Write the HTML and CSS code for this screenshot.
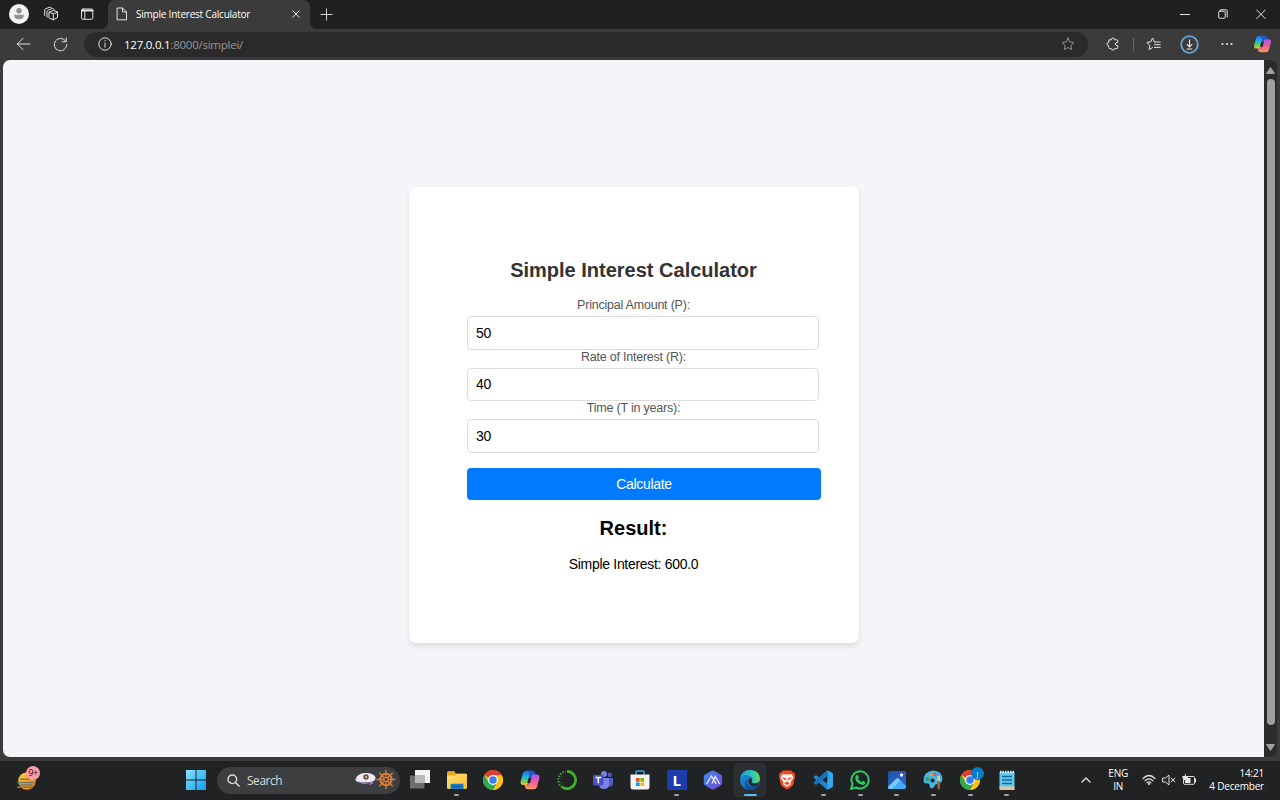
FILE: index.html
```html
<!DOCTYPE html>
<html lang="en">
<head>
<meta charset="utf-8">
<title>Simple Interest Calculator</title>
<link rel="stylesheet" href="styles.css">
</head>
<body>
<svg width="0" height="0" class="defs">
  <defs>
    <linearGradient id="win" x1="0" y1="0" x2="1" y2="1"><stop offset="0" stop-color="#8be2ff"/><stop offset="1" stop-color="#0a9df0"/></linearGradient>
    <linearGradient id="copA" x1="0" y1="0" x2="0" y2="1"><stop offset="0" stop-color="#1673e8"/><stop offset=".35" stop-color="#16a8e8"/><stop offset=".7" stop-color="#5cc96a"/><stop offset="1" stop-color="#f2c32c"/></linearGradient>
    <linearGradient id="copB" x1="0" y1="0" x2="0" y2="1"><stop offset="0" stop-color="#9f5cf0"/><stop offset=".5" stop-color="#ee5a9c"/><stop offset="1" stop-color="#fb9a5a"/></linearGradient>
    <linearGradient id="fold" x1="0" y1="0" x2="1" y2="1"><stop offset="0" stop-color="#ffe07a"/><stop offset="1" stop-color="#fbbd28"/></linearGradient>
    <linearGradient id="edgeA" x1="0" y1="0" x2="1" y2="0"><stop offset="0" stop-color="#1ba3e0"/><stop offset=".6" stop-color="#2fc3b8"/><stop offset="1" stop-color="#63dc5c"/></linearGradient>
    <linearGradient id="edgeB" x1="0" y1="0" x2="1" y2="1"><stop offset="0" stop-color="#1b8fdc"/><stop offset="1" stop-color="#1463b8"/></linearGradient>
    <linearGradient id="hex" x1="0" y1="0" x2="1" y2="1"><stop offset="0" stop-color="#3b8df0"/><stop offset="1" stop-color="#7544d8"/></linearGradient>
    <linearGradient id="photo" x1="0" y1="0" x2="1" y2="1"><stop offset="0" stop-color="#1c54b0"/><stop offset="1" stop-color="#3a5fc8"/></linearGradient>
    <linearGradient id="globe" x1="0" y1="0" x2="1" y2="1"><stop offset="0" stop-color="#ffd23c"/><stop offset="1" stop-color="#e77a12"/></linearGradient>
    <symbol id="copilot" viewBox="0 0 24 24">
      <path d="M7.500 1h7q3 0 3.500 3l.2 1h-2.600q-2 0-2.600 2l-2.500 8.500Q9.800 18 7.500 18H4Q0 18 .8 13.500L3.500 4Q4.500 1 7.500 1z" fill="url(#copA)"/>
      <path d="M14.500 1q3 0 3.500 3l.5 2h-2.700q-2 0-2.600 2L12 12 11 6Q10.500 1 7.500 1z" fill="#2456cc"/>
      <path d="M16.500 23h-7q-3 0-3.500-3l-.4-2h2.800q2 0 2.600-2l2.500-8.500Q14.200 5.500 16.500 5.500H20q4 0 3.200 4.500L20.500 20q-1 3-4 3z" fill="url(#copB)"/>
      <path d="M10.500 9h3.400L12 15.500h-3.400z" fill="#202327"/>
    </symbol>
    <symbol id="chrome" viewBox="0 0 24 24">
      <circle cx="12" cy="12" r="12" fill="#fbc116"/>
      <path d="M12 12 1.600 6A12 12 0 0 1 22.400 6H12z" fill="#e33b2e"/>
      <path d="M1.600 6A12 12 0 0 0 12 24l5.200-9L12 12 6.800 15z" fill="#2da94f"/>
      <path d="M22.400 6A12 12 0 0 1 12 24l5.200-9A6 6 0 0 0 12 6z" fill="#fbc116"/>
      <circle cx="12" cy="12" r="6" fill="#fff"/><circle cx="12" cy="12" r="4.600" fill="#3b7ded"/>
    </symbol>
  </defs>
</svg>
<div class="screen">
  <header class="tabbar">
    <svg class="avatar" viewBox="0 0 20 20"><circle cx="10" cy="10" r="10" fill="#f4f4f4"/><circle cx="10" cy="6.800" r="2.700" fill="#919191"/><path d="M5.300 10.700h9.400q.5 4.500-4.700 4.500t-4.700-4.500z" fill="#919191"/></svg>
    <svg class="spaces line" viewBox="0 0 16 16"><path d="M6.300 6.200 10.500 4.500 14.500 6v5.500l-4.200 2.300-4-1.800zM6.300 6.200l4 1.800 4.200-2M10.300 8v5.800M4 11.200V5.500q0-.8.700-1.100l4-1.700q.8-.2 2.300.5M1.700 9.500V4q0-.8.700-1.100l3.800-1.600q.8-.2 2 .3"/></svg>
    <svg class="vtabs line" viewBox="0 0 14 14"><rect x="1.500" y="2" width="11.300" height="10.300" rx="1.500"/><path d="M2 3.500h10.500" stroke-width="2"/><path d="M4.800 4v8"/></svg>
    <div class="tab">
      <svg class="page-icon line" viewBox="0 0 12 14"><path d="M1.500 1h5L10.500 5v7.800h-9zM6.500 1v4h4"/></svg>
      <span class="tab-title">Simple Interest Calculator</span>
      <svg class="tab-close line" viewBox="0 0 8 8"><path d="m.8.8 6.400 6.400m0-6.400L.8 7.200"/></svg>
    </div>
    <svg class="plus line" viewBox="0 0 14 14"><path d="M7 1v12M1 7h12"/></svg>
    <div class="window-buttons">
      <svg width="10" height="12" class="line" viewBox="0 0 10 12"><path d="M0 6.500h10"/></svg>
      <svg width="10" height="12" class="line" viewBox="0 0 10 12"><rect x=".7" y="3.200" width="6.500" height="7" rx="1"/><path d="M2.500 2.500V1.800h5.700q1 0 1 1V9"/></svg>
      <svg width="10" height="12" class="line" viewBox="0 0 10 12"><path d="m.7 2 8.600 8.600M9.300 2 .7 10.600"/></svg>
    </div>
  </header>

  <nav class="toolbar">
    <svg class="back line" viewBox="0 0 15 14"><path d="M14 7H1.300M7 1.300 1.300 7 7 12.700"/></svg>
    <svg class="reload line" viewBox="0 0 15 15"><path d="M12.800 4.400A6.200 6.200 0 1 0 13.700 7.500M13.200.8v4H9.300"/></svg>
    <div class="address">
      <svg class="info line" viewBox="0 0 14 14"><circle cx="7" cy="7" r="6.200"/><path d="M7 6v4.200M7 3.600v.4"/></svg>
      <span class="url"><b>127.0.0.1</b>:8000/simplei/</span>
      <svg class="star line" viewBox="0 0 14 14"><path d="m7 1 1.800 3.900 4.200.5-3.100 2.900.8 4.300L7 10.500l-3.700 2.100.8-4.300L1 5.400l4.200-.5z"/></svg>
    </div>
    <svg class="ext line" viewBox="0 0 14 14"><path d="M3.700 2.800h1.600Q5.300 1 7 1t1.700 1.800h2.100q1 0 1 1v1.600Q9.300 5.200 9.300 7t2.500 1.700v1.800q0 1-1 1H8.700Q8.700 13 7 13t-1.700-1.500H3.700q-1 0-1-1V8.900Q1 8.900 1 7.200t1.700-1.700V3.800q0-1 1-1z"/></svg>
    <span class="divider"></span>
    <svg class="favs line" viewBox="0 0 15 14"><path d="M8.500 5 6.500 1 4.800 4.900.8 5.500l3 2.900-.8 4.200 3.600-2M8.500 5h5.700M8.500 7.700h5.700M8.500 10.400h5.700"/></svg>
    <svg class="download" viewBox="0 0 19 19"><circle cx="9.500" cy="9.500" r="8.300" fill="none" stroke="#69a7d8" stroke-width="1.800"/><path d="M9.500 4.500v7.300M6.800 9.200l2.700 2.700 2.700-2.700M6.700 14h5.600" fill="none" stroke="#eee" stroke-width="1.100"/></svg>
    <svg class="more" viewBox="0 0 12 4"><g fill="#e5e5e5"><circle cx="1.500" cy="2" r="1.100"/><circle cx="6" cy="2" r="1.100"/><circle cx="10.500" cy="2" r="1.100"/></g></svg>
    <svg class="side-copilot"><use href="#copilot"/></svg>
  </nav>

  <div class="view">
    <main class="viewport">
      <form class="card">
        <h2 class="title">Simple Interest Calculator</h2>
        <label class="label" for="p">Principal Amount (P):</label>
        <input class="field" id="p" value="50">
        <label class="label" for="r">Rate of Interest (R):</label>
        <input class="field" id="r" value="40">
        <label class="label" for="t">Time (T in years):</label>
        <input class="field" id="t" value="30">
        <button class="calculate" type="button">Calculate</button>
        <h2 class="result">Result:</h2>
        <p class="answer">Simple Interest: 600.0</p>
      </form>
    </main>
    <div class="scrollbar">
      <svg width="9" height="7" viewBox="0 0 9 7"><path d="M4.500 .5 8.500 6.500H.5z" fill="#9e9e9e" stroke="#9e9e9e" stroke-linejoin="round"/></svg>
      <span class="thumb"></span>
      <svg width="9" height="7" viewBox="0 0 9 7"><path d="M4.500 6.500.5 .5h8z" fill="#9e9e9e" stroke="#9e9e9e" stroke-linejoin="round"/></svg>
    </div>
  </div>

  <footer class="taskbar">
    <div class="widgets">
      <svg width="22" height="22" viewBox="0 0 22 22"><circle cx="11" cy="11" r="8.800" fill="url(#globe)"/><path d="M4 9.200h9M1.500 12.600h17M3.500 15h13M1 17.200h16" stroke="#77766b" stroke-width="1.500"/></svg>
      <span class="badge">9+</span>
    </div>
    <svg class="start" viewBox="0 0 20 20"><path d="M0 0h9.500v9.500H0zM10.500 0H20v9.500h-9.500zM0 10.500h9.500V20H0zM10.500 10.500H20V20h-9.500z" fill="url(#win)"/></svg>
    <div class="search">
      <svg width="13" height="13" viewBox="0 0 13 13"><circle cx="5.300" cy="5.300" r="4.300" fill="none" stroke="#ddd" stroke-width="1.400"/><path d="m8.500 8.500 4 4" stroke="#ddd" stroke-width="1.500"/></svg>
      <span class="search-text">Search</span>
      <svg class="captain" width="41" height="20" viewBox="0 0 41 20"><path d="M.5 9.500Q2 3.500 10 3q9-.3 10.500 4.500.3 3-4 4.500L6 12.500Q.5 12 .5 9.500z" fill="#eeeaf2"/><path d="M3 11q7 3 15 0v2.500q-6 3.500-12 0z" fill="#9d86bd"/><path d="M4.500 13q6 2 12-.5-3.500 4-8 3-3.500-.7-4-2.500z" fill="#42334e"/><circle cx="11" cy="7" r="2.700" fill="#594a55"/><circle cx="11" cy="7" r="1.300" fill="#d7a24a"/>
        <g stroke="#d8803a" fill="none"><circle cx="31" cy="9.500" r="5.700" stroke-width="2"/><circle cx="31" cy="9.500" r="2" stroke-width="1.500"/><path d="M31 0v19M21.500 9.500h19M24.300 2.800l13.400 13.400M37.700 2.800 24.300 16.200" stroke-width="1.300"/></g><circle cx="31" cy="9.500" r="1.400" fill="#5b311a"/></svg>
    </div>
    <div class="apps">
      <div class="app"><svg viewBox="0 0 20 20"><path d="M5 0h15v13H5z" fill="#f3f3f3"/><path d="M0 5.500h14.500v13H0z" fill="#777" opacity=".88"/><path d="M5 5.500h9.500V13H5z" fill="#b9b9b9"/></svg></div>
      <div class="app open"><svg viewBox="0 0 20 20"><path d="M0 2.500Q0 1 1.500 1H7l2 2.500h9.500Q20 3.500 20 5v6H0z" fill="#e9a51e"/><path d="M0 5.500h8l2-1.500h10v13.500q0 1.500-1.500 1.500h-17Q0 19 0 17.500z" fill="url(#fold)"/><path d="M3.500 19v-4q0-1.200 1.200-1.200h10.600q1.200 0 1.200 1.200v4z" fill="#1678c4"/><path d="M6 16h8v1H6z" fill="#0b5793"/></svg></div>
      <div class="app"><svg><use href="#chrome"/></svg></div>
      <div class="app"><svg><use href="#copilot"/></svg></div>
      <div class="app"><svg viewBox="0 0 20 20"><path d="M10 1.400A8.600 8.600 0 1 1 5 17" fill="none" stroke="#43b02a" stroke-width="2.700"/><path d="M5 17A8.600 8.600 0 0 1 8.500 1.500" fill="none" stroke="#43b02a" stroke-width="2.200" stroke-dasharray="1.300 1.500"/><path d="M6.500 15A6 6 0 0 1 6 5.500" fill="none" stroke="#318523" stroke-dasharray="1 2"/></svg></div>
      <div class="app"><svg viewBox="0 0 20 20"><circle cx="16.800" cy="4.900" r="2.200" fill="#5059c9"/><circle cx="11" cy="4" r="3" fill="#7b83eb"/><path d="M14 8h6v6q-1 3-4.500 3z" fill="#5059c9"/><path d="M6 8h10v6.500q-.5 4.500-5 4.500t-5-4.500z" fill="#7b83eb"/><rect y="5" width="10.500" height="10.500" rx="1" fill="#4b53bc"/><path d="M2.500 7.500h5.700M5.300 7.500v5.700" stroke="#fff" stroke-width="1.500"/></svg></div>
      <div class="app"><svg viewBox="0 0 20 20"><path d="M6 5V2q0-1 1-1h6q1 0 1 1v3" fill="none" stroke="#31a9dc" stroke-width="1.500"/><path d="M.5 4.500h19V17q0 2.500-2.500 2.500H3Q.5 19.500.5 17z" fill="#f3f3f3"/><path d="M6 8h3.700v3.700H6z" fill="#ee5126"/><path d="M10.400 8h3.700v3.700h-3.700z" fill="#7fba00"/><path d="M6 12.400h3.700v3.700H6z" fill="#00a4ef"/><path d="M10.400 12.400h3.700v3.700h-3.700z" fill="#ffb900"/></svg></div>
      <div class="app open"><span class="letter-icon">L</span></div>
      <div class="app"><svg viewBox="0 0 20 20"><path d="M8.800.7q1.200-.7 2.400 0l6.800 4q1.200.7 1.200 2v6.600q0 1.300-1.200 2l-6.800 4q-1.200.7-2.400 0L2 15.300q-1.200-.7-1.200-2V6.700q0-1.300 1.200-2z" fill="url(#hex)"/><path d="M3.500 14 8.500 6l4.700 8M9 13.500l3.200-7 4.500 7.500" fill="none" stroke="#e8eaff" stroke-width="1.400"/></svg></div>
      <div class="app open active"><svg viewBox="0 0 20 20"><circle cx="10" cy="10" r="10" fill="url(#edgeB)"/><path d="M.2 8.500Q1.500 0 10.500 0q9 .6 9.500 8.800-.3 4.400-5 4.400-3.800 0-3.300-1.700 1.500-1.200.5-3.500Q10.500 5 6.500 5 2 5.200.2 8.500z" fill="url(#edgeA)"/><path d="M7.800 8.500q-3 4 1 7.500 4 2.500 8.700-.5l.8.500Q15 20.300 10.500 20 4.500 18.500 5 13q.5-3 2.800-4.500z" fill="#0d509d"/><path d="M11 8.200q2 1.300.7 3.300 0 2 3.300 1.900 2.500 0 4.300-1.400-.3 2.300-1.800 3.600-4.500 2-7-.1-3.500-3.500-1.800-6.300 1-1.700 2.300-1z" fill="#2b2e30"/></svg></div>
      <div class="app"><svg viewBox="0 0 20 20"><path d="m6 .5-2 2-1.500.3L1.800 6l1.800 8q.5 1.700 2 2.700L10 19.600l4.400-2.900q1.500-1 2-2.700l1.800-8-.7-3.200-1.500-.3-2-2z" fill="#f8481f"/><path d="m5.500 4-2 3.500L5 10l1.500 2-.5 2 4 3 4-3-.5-2L15 10l1.500-2.500L14.500 4 12 4.500h-4z" fill="#fff"/><path d="M5.500 7.500 9 8.600 8 10zM14.500 7.500 11 8.600l1 1.400zM10 9v4M7.500 13.300l2.500-1.200 2.500 1.200-2.500 1.600z" fill="#f8481f" stroke="#f8481f" stroke-width=".6"/></svg></div>
      <div class="app open"><svg viewBox="0 0 20 20"><path d="m14 .3 5 2.200q1 .5 1 1.500v12q0 1-1 1.500l-5 2.200V14l.5-8z" fill="#32a8ee"/><path d="M14 19.700 1 8Q.2 7.200 1 6.500l1.200-1q.8-.5 1.500 0L15 14.200z" fill="#1f87ce"/><path d="M14 .3 1 12q-.8.800 0 1.500l1.200 1q.8.500 1.500 0L15 5.800z" fill="#1676bd"/></svg></div>
      <div class="app open"><svg viewBox="0 0 20 20"><path d="M1.200 18.800 2.500 14A8.600 8.600 0 1 1 6 17.500z" fill="none" stroke="#29cc65" stroke-width="2"/><path d="M6.300 5.300q1-1 1.700 0l.9 2q.2.500-.9 1.500 1.300 2.300 3.600 3.300l1.200-1.300 2.400 1.200q.5.300 0 1.600-1.200 2-4 1-4.300-1.400-5.800-5-.6-2.800.9-4.300z" fill="#29cc65"/></svg></div>
      <div class="app open"><svg viewBox="0 0 20 20"><rect x="1" y="1" width="18" height="18" rx="2" fill="url(#photo)"/><path d="m1 17 8-8q1.500-1.300 3 0l7 7v1q0 2-2 2H3q-2 0-2-2z" fill="#3daaf2"/><path d="m1 17 8-8q1.500-1.300 3 0l1.500 1.500L5 19H3q-2 0-2-2z" fill="#73cbfb"/><circle cx="14.500" cy="5" r="1.700" fill="#e1f1ff"/></svg></div>
      <div class="app open"><svg viewBox="0 0 20 20"><path d="M.5 11Q.5 1.500 10 .5q9 .5 9.500 8-.5 5-5 5.500-2.500 0-3 2-.7 3-4 2-1.300-1-.8-3-.2-1.700-3-1.700Q.5 14 .5 11z" fill="#45b4e0"/><circle cx="4.500" cy="9" r="1.900" fill="#32a65c"/><circle cx="8" cy="4.800" r="1.700" fill="#eb9b32"/><circle cx="12" cy="4.300" r="1.500" fill="#df5148"/><circle cx="9.500" cy="10.500" r="2" fill="#202a33"/><path d="M14.500 6h2.400l.3 6h-3z" fill="#e6c69a"/><path d="M14.300 11h2.800v6q-.4 3-1.400 3t-1.400-3z" fill="#ad5e2b"/></svg></div>
      <div class="app open"><svg><use href="#chrome"/></svg><span class="profile">J</span></div>
      <div class="app open"><svg viewBox="0 0 20 20"><path d="M2.500 2h15v16.500h-15z" fill="#62c8ec"/><path d="M2.500 16.500h15V20h-15z" fill="#e5c69a"/><path d="M5 6.500h10M5 10h10M5 13.500h10" stroke="#126799" stroke-width="1.500"/><path d="M3 2h14" stroke="#d9f3fa" stroke-width="2.500" stroke-dasharray="1.500 1"/></svg></div>
    </div>
    <div class="tray">
      <svg class="chevron line" viewBox="0 0 10 6"><path d="m1 5 4-4 4 4" stroke-width="1.400"/></svg>
      <div class="language">ENG<br>IN</div>
      <svg class="wifi line" viewBox="0 0 14 12"><path d="M1 4.500q6-6 12 0M3 6.800q4-4 8 0M5 8.800q2-2 4 0" stroke-width="1.200"/><circle cx="7" cy="10" r="1" fill="#eee" stroke="none"/></svg>
      <svg class="sound line" viewBox="0 0 14 12"><path d="M1 4h2.500L7 1v10L3.500 8H1zM9 4l4 4m0-4L9 8"/></svg>
      <svg class="battery line" viewBox="0 0 15 12"><path d="M6 2.500h5.500q1 0 1 1v5.800q0 1-1 1h-9q-1 0-1-1V6M13.500 5v3"/><path d="M6 4h2.500v5H3V7z" fill="#eee" stroke="none"/><path d="M3.300.5v5M1 2.500h4.500V4Q5.500 6 3.300 6 1 6 1 4z" fill="#eee"/></svg>
      <div class="clock"><span class="time">14:21</span><br><span class="date">4 December</span></div>
    </div>
  </footer>
</div>
</body>
</html>
```

FILE: styles.css
```css
* { box-sizing: border-box; }
body { margin: 0; overflow: hidden; background: #202020; font-family: "Open Sans", "Noto Sans", sans-serif; color: #eee; }
svg { display: block; flex: none; }
.defs { position: absolute; }
.line { fill: none; stroke: #e2e2e2; stroke-width: 1; stroke-linejoin: round; stroke-linecap: round; }
.screen { width: 1280px; height: 800px; display: flex; flex-direction: column; background: #3b3b3b; }

.tabbar { flex: none; height: 29px; background: #202020; display: flex; align-items: center; padding: 0 14px 1px 9px; }
.avatar { width: 20px; height: 20px; }
.spaces { width: 16px; height: 16px; margin-left: 14px; }
.vtabs { width: 14px; height: 14px; margin-left: 21px; }
.tab { position: relative; width: 202px; height: 29px; margin: 0 0 -1px 14px; padding: 0 10px 1px 8px; display: flex; align-items: center; background: #3b3b3b; border-radius: 7px 7px 0 0; }
.tab::before, .tab::after { content: ""; position: absolute; bottom: 0; width: 6px; height: 6px; }
.tab::before { left: -6px; background: radial-gradient(circle at 0 0, #202020 5.500px, #3b3b3b 6px); }
.tab::after { right: -6px; background: radial-gradient(circle at 100% 0, #202020 5.500px, #3b3b3b 6px); }
.page-icon { width: 12px; height: 14px; }
.tab-title { margin-left: 8px; font-size: 10px; white-space: nowrap; letter-spacing: -.22px; color: #fff; }
.tab-close { width: 8px; height: 8px; margin-left: auto; }
.plus { width: 13px; height: 13px; margin-left: 10px; }
.window-buttons { display: flex; gap: 28px; margin-left: auto; }

.toolbar { flex: none; height: 31px; display: flex; align-items: center; padding: 0 8px 1px 16px; }
.back { width: 15px; height: 14px; }
.reload { width: 15px; height: 15px; margin-left: 22px; }
.address { width: 1004px; height: 25px; margin-left: 16px; padding: 0 13px 0 14px; display: flex; align-items: center; border-radius: 13px; background: #2a2a2a; }
.info { width: 14px; height: 14px; }
.url { margin-left: 12px; font-size: 11.500px; color: #989898; letter-spacing: -.24px; }
.url b { font-weight: 400; color: #fff; }
.star { width: 14px; height: 14px; margin-left: auto; stroke: #929292; }
.ext { width: 14px; height: 14px; margin-left: 18px; }
.divider { width: 1px; height: 13px; margin-left: 13px; background: #686868; }
.favs { width: 15px; height: 14px; margin-left: 12px; }
.download { width: 19px; height: 19px; margin-left: 19px; }
.more { width: 12px; height: 4px; margin-left: 22px; }
.side-copilot { width: 19px; height: 18px; margin-left: auto; }

.view { flex: none; height: 697px; display: flex; padding: 0 3px; }
.viewport { width: 1261px; height: 697px; padding-top: 127px; background: #f4f4f9; border-radius: 7px 0 0 7px; font-family: "Liberation Sans", Arial, sans-serif; }
.card { width: 450px; height: 456px; margin: 0 auto; padding: 72px 37px 0 58.500px; background: #fff; border-radius: 7px; box-shadow: 0 3px 5px rgba(0, 0, 0, .1); display: flex; flex-direction: column; }
.title, .result { margin: 0; width: 333px; text-align: center; font-size: 20px; line-height: 23px; font-weight: 700; }
.title { color: #333; margin-bottom: 15px; }
.label { width: 333px; height: 15px; line-height: 16px; text-align: center; font-size: 12.500px; letter-spacing: -.22px; color: #555; }
.field { width: 352px; height: 33.500px; margin: 4.300px 0 -1.300px; padding: 0 8px 1px; border: 1px solid #ddd; border-radius: 4px; background: #fff; color: #000; font: 14px "Liberation Sans", Arial, sans-serif; letter-spacing: -.3px; }
.calculate { width: 354px; height: 32px; margin-top: 16px; padding: 0; border: 0; border-radius: 4px; background: #007bff; color: #fff; font: 14px "Liberation Sans", Arial, sans-serif; letter-spacing: -.3px; }
.result { margin-top: 17px; color: #000; }
.answer { margin: 16px 0 0; width: 333px; line-height: 16px; text-align: center; font-size: 14px; letter-spacing: -.3px; color: #000; }
.scrollbar { width: 13px; display: flex; flex-direction: column; align-items: center; padding: 7px 0 6px; background: #2b2b2b; border-radius: 0 7px 7px 0; }
.thumb { width: 8px; height: 646px; margin: 5px 0 auto; border-radius: 4px; background: #9e9e9e; }

.taskbar { height: 39px; margin-top: 4px; padding-bottom: 1px; background: #202224; display: flex; align-items: center; }
.widgets { position: relative; width: 24px; height: 26px; margin-left: 16px; padding-top: 3px; }
.badge { position: absolute; left: 10px; top: -1px; width: 14px; height: 14px; border-radius: 50%; background: #ff9aa8; color: #301418; font-size: 9px; line-height: 14px; text-align: center; letter-spacing: -.3px; }
.start { width: 20px; height: 20px; margin-left: 145.500px; }
.search { width: 183px; height: 27px; margin-left: 11.500px; padding: 0 4px 0 10px; display: flex; align-items: center; background: #3c3e40; border-radius: 14px; }
.search-text { margin-left: 7px; font-size: 11.800px; letter-spacing: -.35px; color: #ddd; }
.captain { margin-left: auto; }
.apps { display: flex; margin-left: 1.500px; }
.app { position: relative; width: 36.690px; height: 38px; display: grid; place-items: center; }
.app svg { width: 20px; height: 20px; }
.app.open::after { content: ""; position: absolute; bottom: 3px; width: 5px; height: 2.500px; border-radius: 2px; background: #a0a0a0; }
.app.active::before { content: ""; position: absolute; inset: 2px 2px; border: 1px solid #303335; border-radius: 4px; background: #2b2e30; }
.app.active svg { position: relative; }
.app.active::after { width: 13px; background: #58bbed; }
.letter-icon { width: 20px; height: 20px; background: #1d3cad; color: #fff; font: 700 15px/20px "Open Sans", sans-serif; text-align: center; }
.profile { position: absolute; left: 19px; top: 6px; width: 13px; height: 13px; border-radius: 50%; background: #087bc3; color: #bce2f6; font-size: 8px; line-height: 13px; text-align: center; }
.tray { flex: 1; display: flex; align-items: center; padding: 0 16px 0 56px; font-size: 10px; line-height: 13.500px; letter-spacing: -.2px; color: #fff; }
.chevron { width: 10px; height: 6px; }
.language { width: 24px; margin-left: 15px; text-align: center; }
.wifi { width: 14px; height: 12px; margin-left: 12px; }
.sound { width: 14px; height: 12px; margin-left: 6px; }
.battery { width: 15px; height: 12px; margin-left: 6px; }
.clock { margin-left: auto; text-align: right; white-space: nowrap; }
```
